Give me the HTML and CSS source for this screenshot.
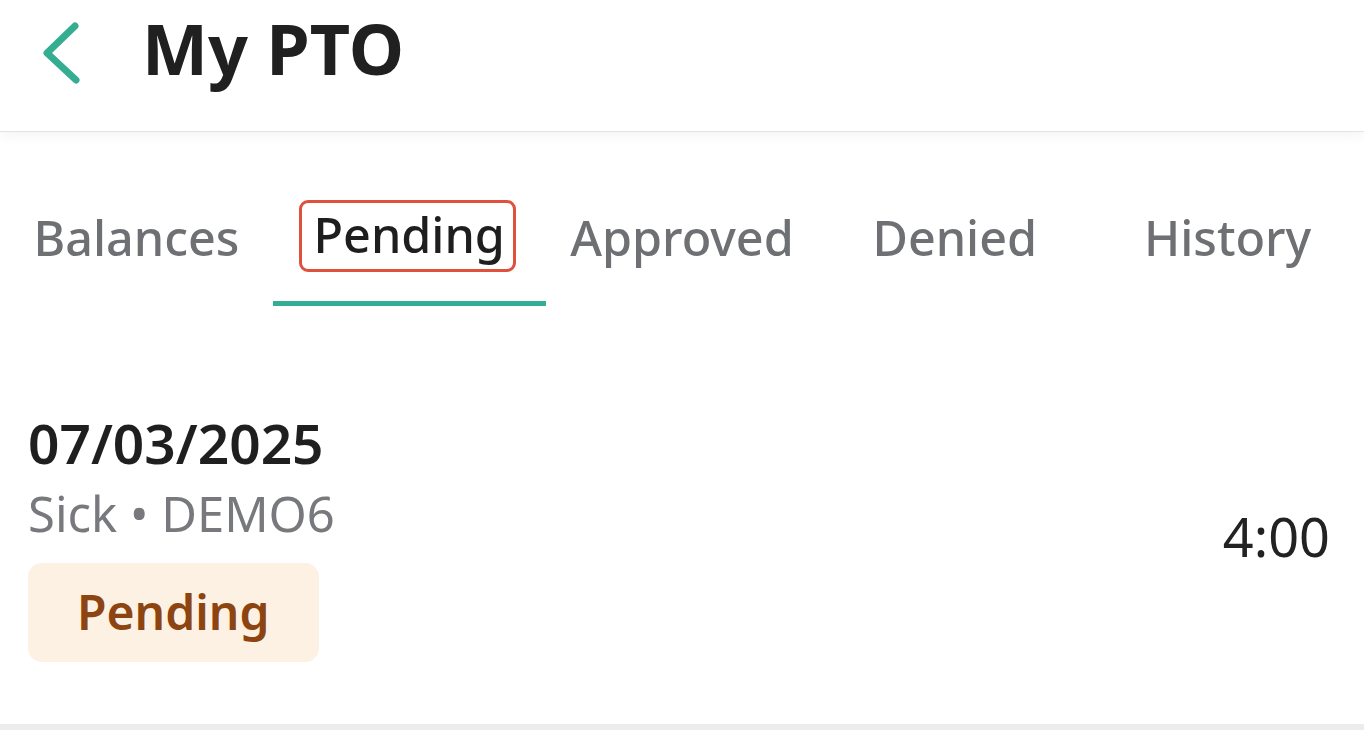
FILE: index.html
```html
<!DOCTYPE html>
<html>
<head>
<meta charset="utf-8">
<link rel="stylesheet" href="styles.css">
</head>
<body>
<header class="topbar">
  <svg class="back" width="44" height="64" viewBox="0 0 44 64"><path d="M35 6 L7 33 L36 60" fill="none" stroke="#34ad90" stroke-width="7" stroke-linecap="round" stroke-linejoin="round"/></svg>
  <h1 class="title">My PTO</h1>
</header>
<nav class="tabs">
  <div class="tab">Balances</div>
  <div class="tab active"><span class="label">Pending</span></div>
  <div class="tab">Approved</div>
  <div class="tab">Denied</div>
  <div class="tab">History</div>
</nav>
<section class="item">
  <div class="info">
    <div class="date">07/03/2025</div>
    <div class="meta">Sick • DEMO6</div>
    <div class="badge">Pending</div>
  </div>
  <div class="hours">4:00</div>
</section>
</body>
</html>
```
FILE: styles.css
```css
html, body { margin: 0; padding: 0; background: #fff; }
body { font-family: "Noto Sans", "Open Sans", sans-serif; color: #222; }
.topbar {
  height: 132px;
  display: flex;
  align-items: center;
  padding-left: 40px;
  border-bottom: 1px solid #e4e4e4;
  box-shadow: 0 3px 14px rgba(0,0,0,0.05);
  box-sizing: border-box;
  padding-bottom: 28px;
  position: relative;
  z-index: 1;
}
.back { display: block; margin-right: 58px; }
.title { margin: -8px 0 0 0; font-size: 70px; font-weight: 700; color: #202020; letter-spacing: 0; }
.tabs { display: flex; height: 174px; }
.tab {
  flex: 1;
  display: flex;
  align-items: center;
  justify-content: center;
  font-size: 48.5px;
  font-weight: 500;
  color: #6e7073;
  padding-top: 35px;
  box-sizing: border-box;
  position: relative;
}
.tab.active { color: #1e1e1e; border-bottom: 5px solid #33ad93; }
.tab.active .label { position: relative; }
.tab.active .label::after {
  content: "";
  position: absolute;
  left: -14px; right: -11px; top: -1px; bottom: -5px;
  border: 3px solid #e0513d;
  border-radius: 9px;
}
.item {
  display: flex;
  justify-content: space-between;
  align-items: center;
  padding: 102px 34px 62px 28px;
  border-bottom: 7px solid #ececec;
}
.date { font-size: 55px; font-weight: 600; color: #1f1f1f; line-height: 70px; }
.meta { font-size: 49px; color: #77797c; line-height: 70px; margin-top: 0px; }
.badge {
  display: inline-block;
  margin-top: 15px;
  background: #fdf1e4;
  color: #8c4410;
  font-size: 48px;
  font-weight: 600;
  border-radius: 14px;
  padding: 16px 49px 17px 49px;
  line-height: 66px;
}
.hours { font-size: 54px; color: #222; margin-top: 2px; }
```
